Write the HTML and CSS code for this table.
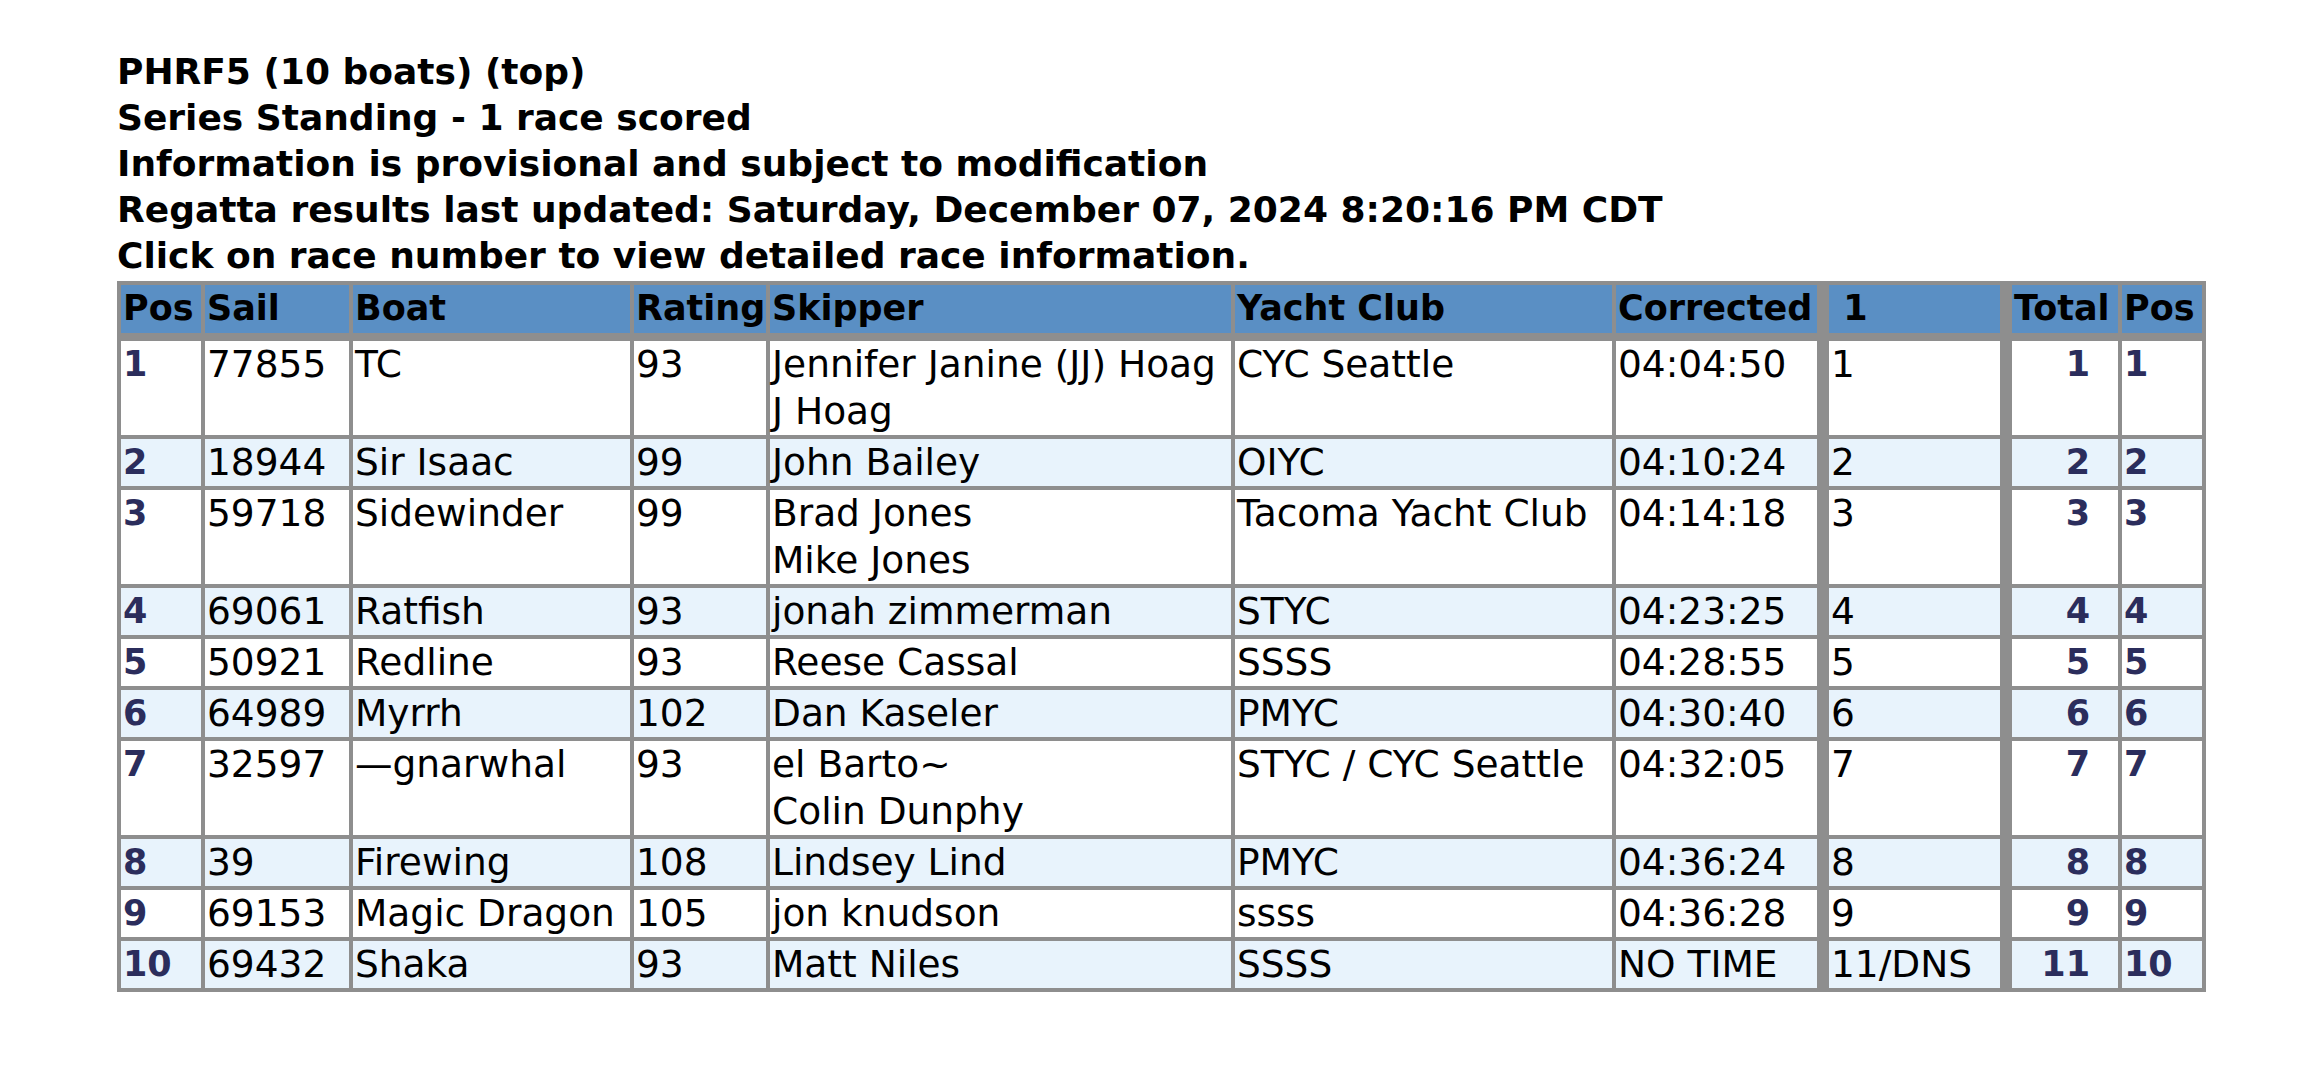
FILE: index.html
```html
<!DOCTYPE html>
<html>
<head>
<meta charset="utf-8">
<title>PHRF5 Series Standing</title>
<link rel="stylesheet" href="styles.css">
</head>
<body>
<div class="intro">
  <div class="line">PHRF5 (10 boats) (top)</div>
  <div class="line">Series Standing - 1 race scored</div>
  <div class="line">Information is provisional and subject to modification</div>
  <div class="line">Regatta results last updated: Saturday, December 07, 2024 8:20:16 PM CDT</div>
  <div class="line">Click on race number to view detailed race information.</div>
</div>
<table class="results">
  <thead>
    <tr>
      <th class="c-pos">Pos</th>
      <th class="c-sail">Sail</th>
      <th class="c-boat">Boat</th>
      <th class="c-rating">Rating</th>
      <th class="c-skipper">Skipper</th>
      <th class="c-club">Yacht Club</th>
      <th class="c-corr">Corrected</th>
      <th class="c-race sep">&nbsp;1</th>
      <th class="c-total sep">Total</th>
      <th class="c-pos">Pos</th>
    </tr>
  </thead>
  <tbody>
    <tr class="odd">
      <td class="pos">1</td><td>77855</td><td>TC</td><td>93</td>
      <td>Jennifer Janine (JJ) Hoag<br>J Hoag</td><td>CYC Seattle</td><td>04:04:50</td>
      <td class="sep">1</td><td class="total sep">1</td><td class="pos">1</td>
    </tr>
    <tr class="even">
      <td class="pos">2</td><td>18944</td><td>Sir Isaac</td><td>99</td>
      <td>John Bailey</td><td>OIYC</td><td>04:10:24</td>
      <td class="sep">2</td><td class="total sep">2</td><td class="pos">2</td>
    </tr>
    <tr class="odd">
      <td class="pos">3</td><td>59718</td><td>Sidewinder</td><td>99</td>
      <td>Brad Jones<br>Mike Jones</td><td>Tacoma Yacht Club</td><td>04:14:18</td>
      <td class="sep">3</td><td class="total sep">3</td><td class="pos">3</td>
    </tr>
    <tr class="even">
      <td class="pos">4</td><td>69061</td><td>Ratfish</td><td>93</td>
      <td>jonah zimmerman</td><td>STYC</td><td>04:23:25</td>
      <td class="sep">4</td><td class="total sep">4</td><td class="pos">4</td>
    </tr>
    <tr class="odd">
      <td class="pos">5</td><td>50921</td><td>Redline</td><td>93</td>
      <td>Reese Cassal</td><td>SSSS</td><td>04:28:55</td>
      <td class="sep">5</td><td class="total sep">5</td><td class="pos">5</td>
    </tr>
    <tr class="even">
      <td class="pos">6</td><td>64989</td><td>Myrrh</td><td>102</td>
      <td>Dan Kaseler</td><td>PMYC</td><td>04:30:40</td>
      <td class="sep">6</td><td class="total sep">6</td><td class="pos">6</td>
    </tr>
    <tr class="odd">
      <td class="pos">7</td><td>32597</td><td>—gnarwhal</td><td>93</td>
      <td>el Barto~<br>Colin Dunphy</td><td>STYC / CYC Seattle</td><td>04:32:05</td>
      <td class="sep">7</td><td class="total sep">7</td><td class="pos">7</td>
    </tr>
    <tr class="even">
      <td class="pos">8</td><td>39</td><td>Firewing</td><td>108</td>
      <td>Lindsey Lind</td><td>PMYC</td><td>04:36:24</td>
      <td class="sep">8</td><td class="total sep">8</td><td class="pos">8</td>
    </tr>
    <tr class="odd">
      <td class="pos">9</td><td>69153</td><td>Magic Dragon</td><td>105</td>
      <td>jon knudson</td><td>ssss</td><td>04:36:28</td>
      <td class="sep">9</td><td class="total sep">9</td><td class="pos">9</td>
    </tr>
    <tr class="even">
      <td class="pos">10</td><td>69432</td><td>Shaka</td><td>93</td>
      <td>Matt Niles</td><td>SSSS</td><td>NO TIME</td>
      <td class="sep">11/DNS</td><td class="total sep">11</td><td class="pos">10</td>
    </tr>
  </tbody>
</table>
</body>
</html>
```
FILE: styles.css
```css
html, body {
  margin: 0;
  padding: 0;
  background: #ffffff;
}

body {
  padding: 49px 0 0 117px;
  font-family: "DejaVu Sans", Verdana, sans-serif;
  font-size: 35px;
  color: #000000;
}

.intro {
  font-size: 36px;
  font-weight: bold;
  line-height: 46px;
  margin-bottom: 2px;
}

.results {
  border-collapse: separate;
  border-spacing: 0;
  border: 2px solid #8e8e8e;
  background: #8e8e8e;
  table-layout: fixed;
  width: 2089px;
}

.results th,
.results td {
  box-sizing: border-box;
  border: 2px solid #8e8e8e;
  padding: 0 0 0 2px;
  line-height: 47px;
  text-align: left;
  vertical-align: top;
  white-space: nowrap;
  overflow: visible;
}

.results th {
  background: #5a8fc4;
  font-size: 35px;
  font-weight: bold;
  border-bottom-width: 6px;
  padding-bottom: 1px;
}

.results td {
  font-size: 37.5px;
}

.results .sep {
  border-left-width: 10px;
}

.c-pos { width: 84px; }
.c-sail { width: 148px; }
.c-boat { width: 281px; }
.c-rating { width: 136px; }
.c-skipper { width: 465px; }
.c-club { width: 381px; }
.c-corr { width: 205px; }
.c-race { width: 183px; }
.c-total { width: 118px; }

.odd td { background: #ffffff; }
.even td { background: #e8f3fc; }

.results td.pos,
.results td.total {
  font-size: 35px;
  font-weight: bold;
  color: #2b2d5c;
}

.results td.total {
  text-align: right;
  padding-right: 28px;
}
```
